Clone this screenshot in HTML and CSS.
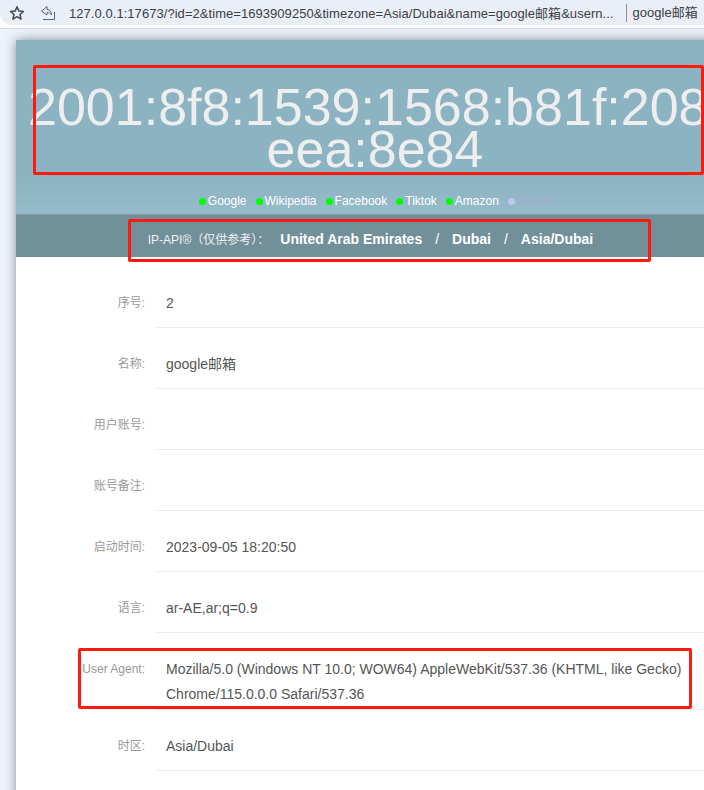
FILE: index.html
```html
<!DOCTYPE html>
<html lang="en">
<head>
    <meta charset="UTF-8">
    <meta name="viewport" content="width=device-width, initial-scale=1.0">
    <title>google邮箱</title>
    <link rel="stylesheet" href="styles.css">
</head>
<body>
    <!-- Browser bar -->
    <div class="browser-bar">
        <div class="address">
            <svg class="icon-star" width="16" height="16" viewBox="0 0 16 16"><path d="M8 1.800l1.900 4.300 4.600.4-3.500 3 1.100 4.600L8 11.700l-4.100 2.400L5 9.500l-3.500-3 4.600-.4z" fill="none" stroke="#45484d" stroke-width="1.500" stroke-linejoin="round"/></svg>
            <svg class="icon-share" width="16" height="16" viewBox="0 0 16 16"><path d="M7 1.500L1.500 6.200 7 10V7.500c2 0 3.500.8 4.500 2.500 0-3.500-1.500-5.300-4.500-5.500zM14.500 7v7.500H3" fill="none" stroke="#5f6368" stroke-width="1"/></svg>
            <span class="url">127.0.0.1:17673/?id=2&amp;time=1693909250&amp;timezone=Asia/Dubai&amp;name=google邮箱&amp;usern...</span>
            <span class="page-name">google邮箱</span>
        </div>
    </div>

    <div class="card">
        <div class="card-head">
            <div class="ip">2001:8f8:1539:1568:b81f:208:eea:8e84</div>
            <div class="links">
                <span class="link"><i class="dot"></i>Google</span>
                <span class="link"><i class="dot"></i>Wikipedia</span>
                <span class="link"><i class="dot"></i>Facebook</span>
                <span class="link"><i class="dot"></i>Tiktok</span>
                <span class="link"><i class="dot"></i>Amazon</span>
                <span class="link off"><i class="dot"></i>Whoer</span>
            </div>
        </div>
        <div class="geo">
            <span class="geo-label">IP-API®（仅供参考）：</span>
            <b>United Arab Emirates</b><b class="sep">/</b><b>Dubai</b><b class="sep">/</b><b>Asia/Dubai</b>
        </div>

        <div class="rows">
            <div class="row"><div class="label">序号:</div><div class="value">2</div></div>
            <div class="row"><div class="label">名称:</div><div class="value">google邮箱</div></div>
            <div class="row"><div class="label">用户账号:</div><div class="value"></div></div>
            <div class="row"><div class="label">账号备注:</div><div class="value"></div></div>
            <div class="row"><div class="label">启动时间:</div><div class="value">2023-09-05 18:20:50</div></div>
            <div class="row"><div class="label">语言:</div><div class="value">ar-AE,ar;q=0.9</div></div>
            <div class="row"><div class="label">User Agent:</div><div class="value">Mozilla/5.0 (Windows NT 10.0; WOW64) AppleWebKit/537.36 (KHTML, like Gecko) Chrome/115.0.0.0 Safari/537.36</div></div>
            <div class="row"><div class="label">时区:</div><div class="value">Asia/Dubai</div></div>
        </div>
    </div>

    <!-- Red annotation boxes -->
    <div class="mark mark-ip"></div>
    <div class="mark mark-geo"></div>
    <div class="mark mark-ua"></div>
</body>
</html>
```

FILE: styles.css
```css
html, body {
    height: 790px;
    overflow: hidden;
}
body {
    position: relative;
    margin: 0;
    background: #eef2fb;
    font-family: "Liberation Sans", "Noto Sans CJK SC", sans-serif;
}
.browser-bar {
    height: 28px;
    background: #fff;
    border-bottom: 1px solid #d5d8df;
}
.address {
    display: flex;
    align-items: center;
    height: 25px;
    background: #e9eef7;
    border-radius: 0 0 0 12px;
    padding-left: 9px;
    font-size: 13px;
    color: #3c4043;
    white-space: nowrap;
    overflow: hidden;
}
.icon-share {
    margin-left: 15px;
}
.url {
    margin-left: 13px;
    letter-spacing: 0.05px;
}
.page-name {
    margin-left: 12px;
    padding-left: 6px;
    border-left: 1px solid #8a8d93;
    line-height: 18px;
}
.card {
    width: 718px;
    height: 760px;
    margin: 11px 0 0 16px;
    background: #fff;
    box-shadow: 0 0 11px rgba(50, 60, 75, 0.55);
}
.card-head {
    height: 174px;
    background: linear-gradient(to bottom, #8cb3c2 80%, #97bbca);
    overflow: hidden;
}
.ip {
    height: 84px;
    padding-top: 46px;
    font-size: 52px;
    line-height: 42px;
    color: #eeeeee;
    text-align: center;
    word-break: break-word;
}
.links {
    display: flex;
    justify-content: center;
    gap: 9px;
    margin-top: 23px;
    padding-left: 1px;
    font-size: 12px;
    line-height: 16px;
    color: #fff;
}
.link {
    display: flex;
    align-items: center;
}
.dot {
    width: 7px;
    height: 7px;
    margin-right: 2px;
    border-radius: 50%;
    background: #00ff00;
}
.link.off {
    color: #a8add0;
}
.link.off .dot {
    background: #c0c4f0;
}
.geo {
    display: flex;
    align-items: center;
    justify-content: center;
    height: 43px;
    padding: 5px 9px 0 0;
    background: #72909a;
    border-top: 1px solid #7f9aa4;
    box-sizing: border-box;
    color: #fff;
    font-size: 14px;
}
.geo-label {
    font-size: 12px;
    color: #eef2f4;
    margin-right: 11px;
}
.geo .sep {
    margin: 0 13px;
    font-weight: normal;
}
.rows {
    padding-top: 10px;
}
.row {
    display: flex;
    margin-top: 24px;
}
.label {
    width: 129px;
    flex-shrink: 0;
    text-align: right;
    font-size: 12px;
    line-height: 25px;
    color: #999;
}
.value {
    flex: 1;
    min-height: 37px;
    margin-left: 11px;
    padding: 0 10px 2px;
    border-bottom: 1px solid #eee;
    box-sizing: border-box;
    font-size: 14px;
    line-height: 25px;
    color: #555;
}
.mark {
    position: absolute;
    border: 3px solid #ff1a10;
    border-radius: 2px;
    box-sizing: border-box;
}
.mark-ip {
    left: 33px;
    top: 65px;
    width: 671px;
    height: 110px;
}
.mark-geo {
    left: 128px;
    top: 219px;
    width: 523px;
    height: 43px;
}
.mark-ua {
    left: 78px;
    top: 648px;
    width: 614px;
    height: 61px;
}
```
